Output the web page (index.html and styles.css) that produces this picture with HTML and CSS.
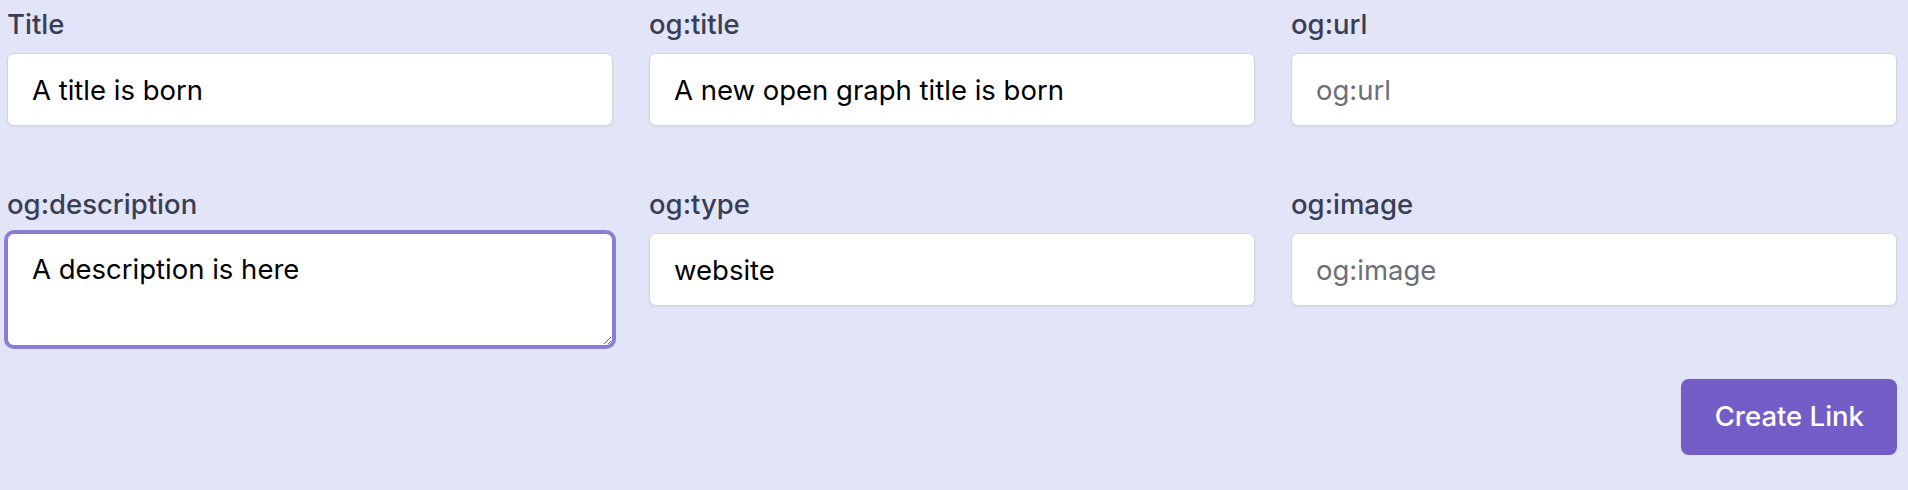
FILE: index.html
```html
<!DOCTYPE html>
<html lang="en">
<head>
    <meta charset="UTF-8">
    <meta name="viewport" content="width=device-width, initial-scale=1.0">
    <title>Create Link</title>
    <link rel="stylesheet" href="styles.css">
</head>
<body>
    <form class="link-form" onsubmit="return false;">
        <div class="fields">
            <div class="field">
                <label for="title">Title</label>
                <input id="title" type="text" placeholder="Title" value="A title is born">
            </div>
            <div class="field">
                <label for="ogTitle">og:title</label>
                <input id="ogTitle" type="text" placeholder="og:title" value="A new open graph title is born">
            </div>
            <div class="field">
                <label for="ogUrl">og:url</label>
                <input id="ogUrl" type="text" placeholder="og:url">
            </div>
            <div class="field">
                <label for="ogDescription">og:description</label>
                <textarea id="ogDescription" placeholder="og:description">A description is here</textarea>
            </div>
            <div class="field">
                <label for="ogType">og:type</label>
                <input id="ogType" type="text" placeholder="og:type" value="website">
            </div>
            <div class="field">
                <label for="ogImage">og:image</label>
                <input id="ogImage" type="text" placeholder="og:image">
            </div>
        </div>
        <div class="actions">
            <button type="submit" class="btn-create">Create Link</button>
        </div>
    </form>

    <script>
        // Fokus ke deskripsi, kursor di akhir teks
        const desc = document.getElementById('ogDescription');
        desc.focus();
        desc.setSelectionRange(desc.value.length, desc.value.length);
    </script>
</body>
</html>
```

FILE: styles.css
```css
/* CSS Style */
body {
    font-family: Inter, Roboto, "Noto Sans", Arial, sans-serif;
    background-color: #e2e4f8;
    margin: 0;
    padding: 0;
}
.link-form {
    padding: 5px 11px 0 7px;
}
.fields {
    display: grid;
    grid-template-columns: repeat(3, 1fr);
    column-gap: 36px;
    row-gap: 59px;
}
.field {
    display: flex;
    flex-direction: column;
}
.field label {
    font-size: 27.5px;
    line-height: 39px;
    font-weight: 500;
    color: #3a3e55;
    margin-bottom: 9px;
}
.field input,
.field textarea {
    box-sizing: border-box;
    width: 100%;
    height: 73px;
    padding: 16px 24px;
    font-family: inherit;
    font-size: 27.5px;
    line-height: 39px;
    color: #000;
    background-color: #fff;
    border: 1px solid #d3d4de;
    border-radius: 7px;
    box-shadow: 0 1px 2px rgba(0, 0, 0, 0.06);
    outline: none;
    margin: 0;
}
.field textarea {
    height: 113px;
    resize: vertical;
}
.field input::placeholder,
.field textarea::placeholder {
    color: #6e6e78;
}
.field input:focus,
.field textarea:focus {
    border-color: #8878d4;
    box-shadow: 0 0 0 3px #8a7dd6;
    caret-color: #000;
}
.actions {
    display: flex;
    justify-content: flex-end;
    margin-top: 33px;
}
.btn-create {
    font-family: inherit;
    font-size: 27.5px;
    line-height: 39px;
    font-weight: 500;
    color: #fff;
    background-color: #735dc6;
    border: none;
    border-radius: 8px;
    padding: 18px 33px 19px 34px;
    cursor: pointer;
    box-shadow: 0 1px 3px rgba(0, 0, 0, 0.08);
}
```
